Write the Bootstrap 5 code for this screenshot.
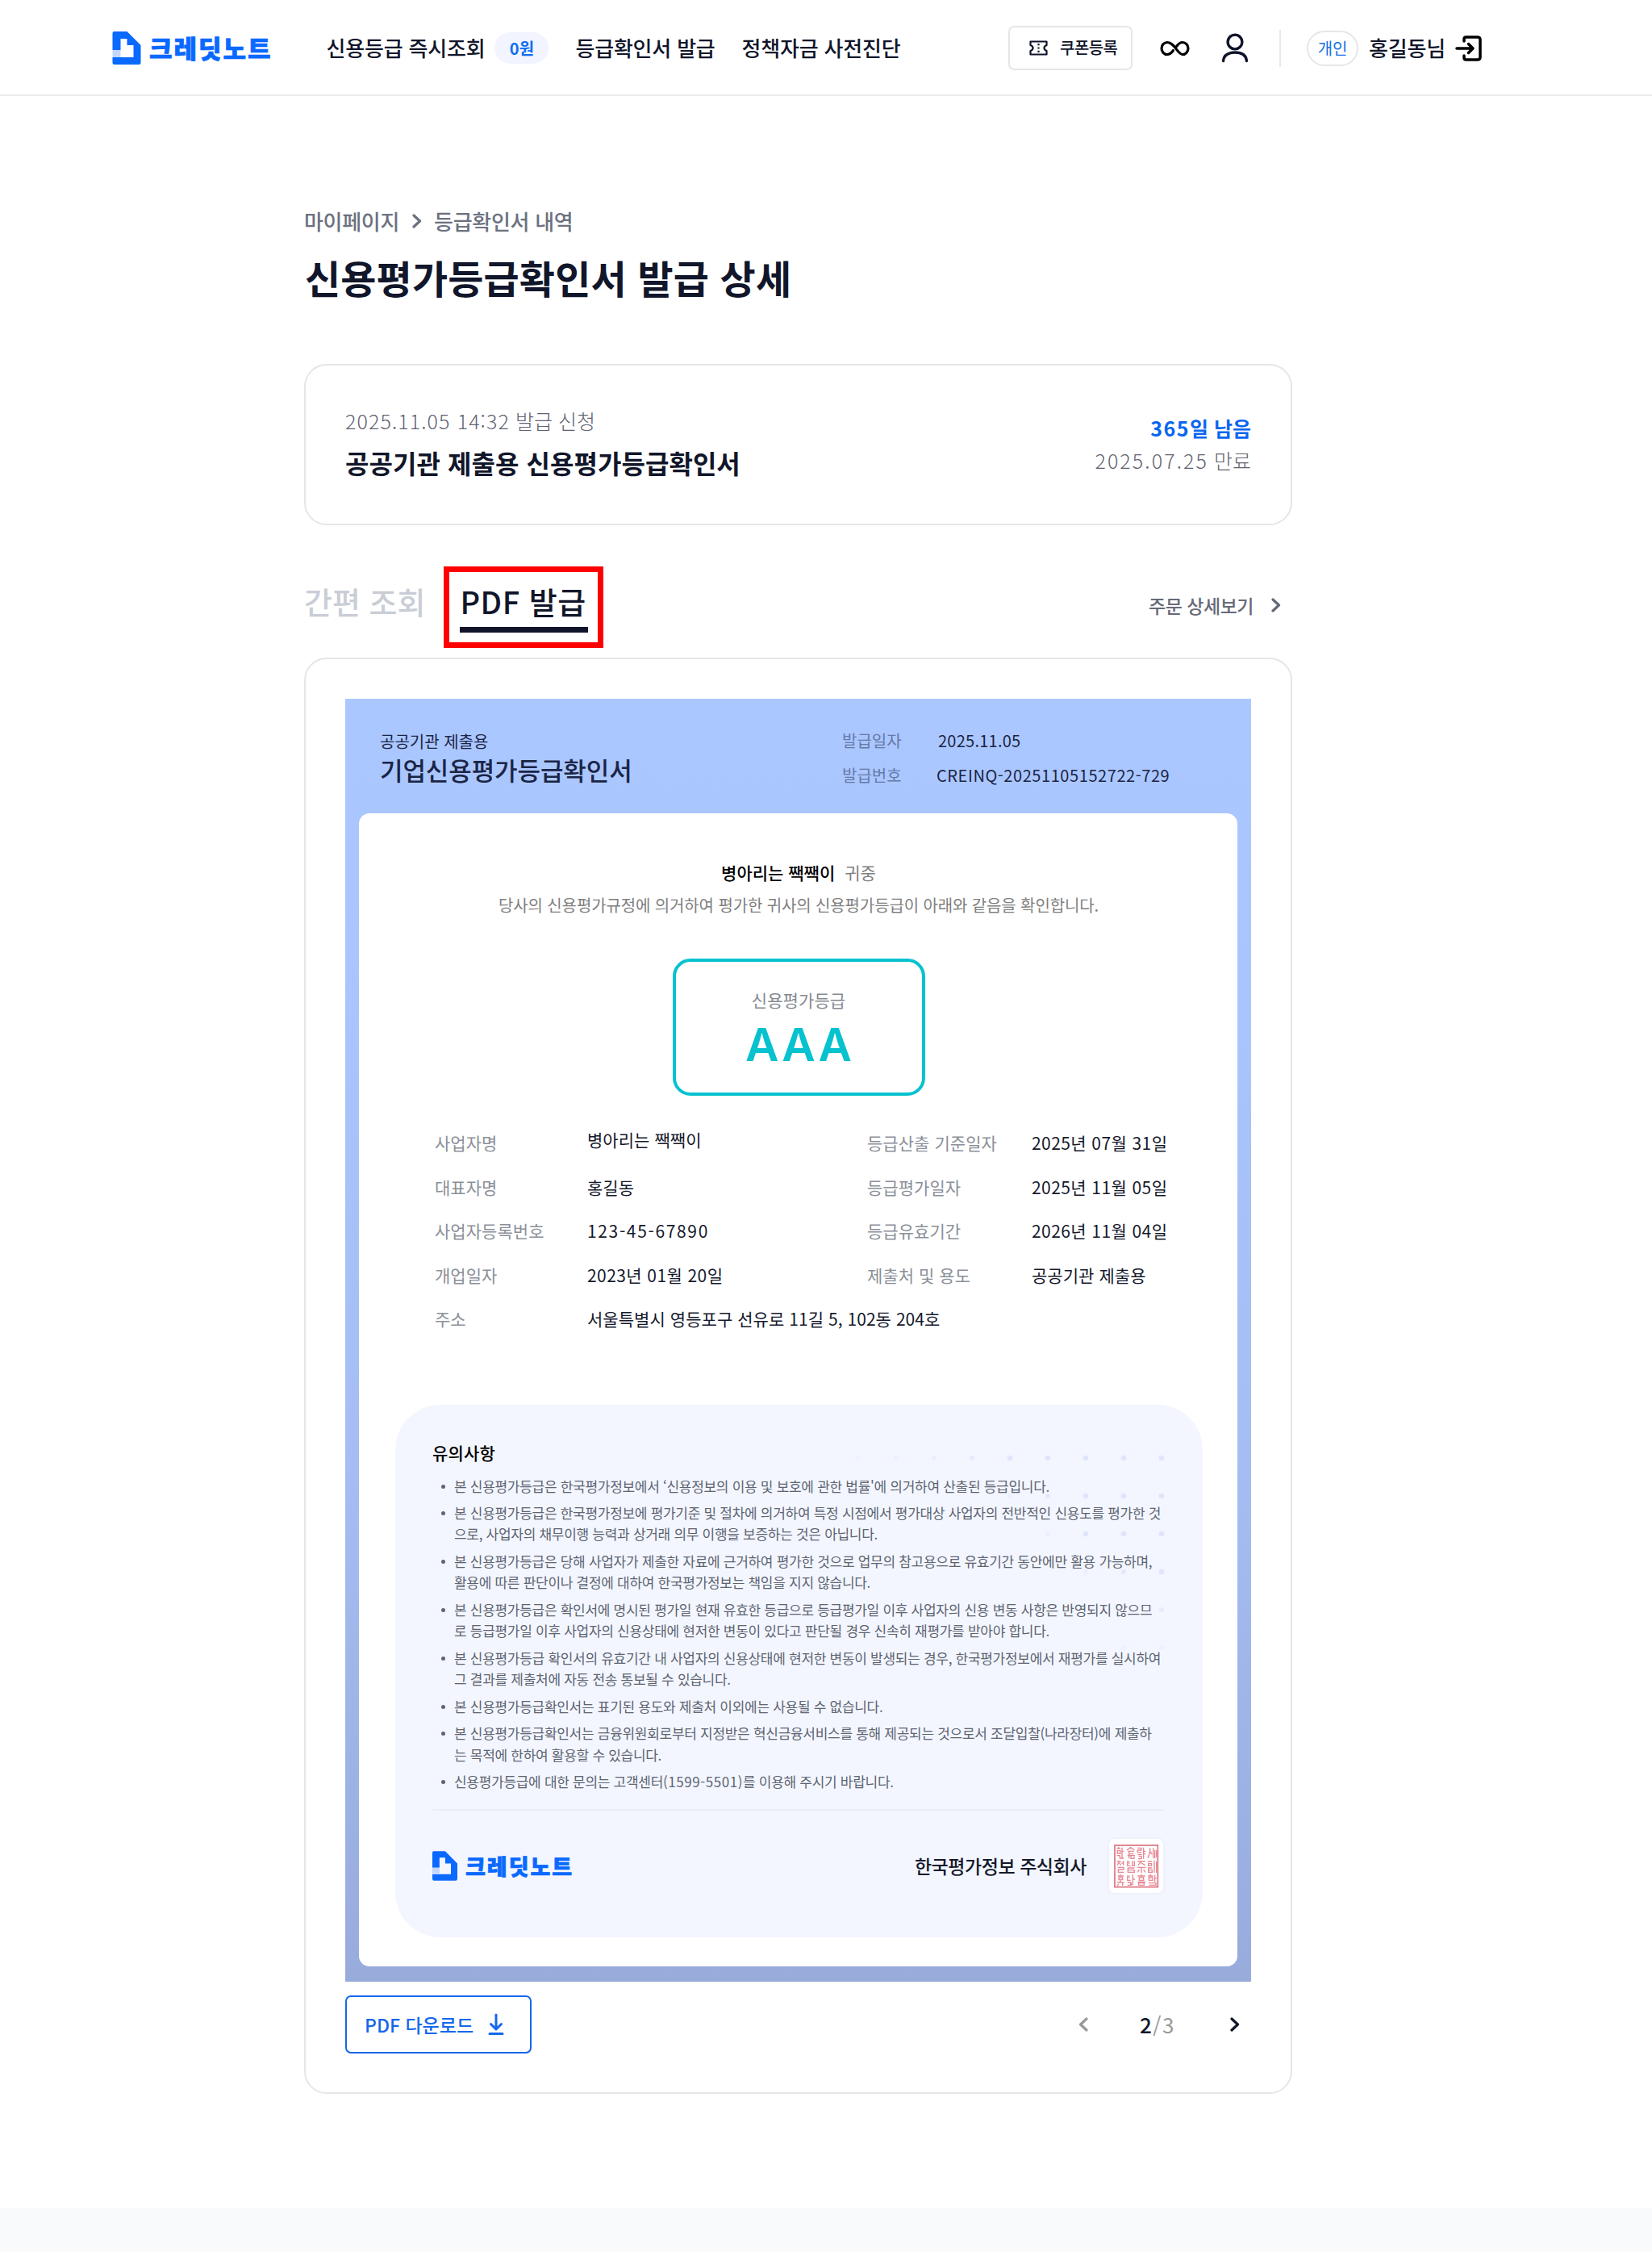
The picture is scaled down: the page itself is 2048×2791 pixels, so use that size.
<!DOCTYPE html>
<html lang="ko">
<head>
<meta charset="utf-8">
<meta name="viewport" content="width=device-width, initial-scale=1">
<title>신용평가등급확인서 발급 상세</title>
<link href="https://cdn.jsdelivr.net/npm/bootstrap@5.3.0/dist/css/bootstrap.min.css" rel="stylesheet">
<style>
body{font-family:"Noto Sans CJK KR","Noto Sans",sans-serif;color:#11162a;background:#fff;min-height:2791px;line-height:1}
a{color:inherit;text-decoration:none}
svg{display:block;flex:none}
.text-line{white-space:nowrap;display:block}
/* header */
.site-head{height:119px;border-bottom:2px solid #ebebeb;padding:2px 211px 0 139px}
.site-head .text-line{margin-top:-2px}
.brand-word{color:#0a69ff;font-weight:900;-webkit-text-stroke:.7px #0a69ff}
.site-head .brand-word{font-size:31px;letter-spacing:2px;margin-left:10px}
.site-menu{margin-left:67px}
.menu-link{font-size:26px;font-weight:500;letter-spacing:-.2px}
.menu-link + .menu-link,.won-pill + .menu-link{margin-left:33px}
.won-pill{background:#f2f4ff;color:#1070f0;font-size:20px;font-weight:700;border-radius:20px;width:67px;height:39px;margin-left:12px}
.coupon{border:2px solid #e6e6e9;border-radius:7px;width:154px;height:55px;font-size:20px;font-weight:500;padding:0 0 0 24px;letter-spacing:-.6px}
.coupon .text-line{margin-left:15px}
.head-rule{width:2px;height:46px;background:#e9e9ec;margin:0 32px 0 38px}
.kind-pill{border:2px solid #e6e6e9;border-radius:22px;width:64px;height:44px;color:#1673e6;font-size:20px}
.user-name{font-size:26px;font-weight:500;margin-left:13px;letter-spacing:-.2px}
/* main column */
.page-col{width:1225px;margin-left:377px;padding-top:136px}
.crumbs{font-size:26px;font-weight:500;color:#6b7180;letter-spacing:-.3px;height:38px}
.crumbs svg{margin:0 15px 0 16px}
.page-title{font-size:48px;font-weight:600;line-height:64px;margin:18px 0 0 1px;letter-spacing:.15px}
.panel{border:2px solid #e6e6e8;border-radius:28px;background:#fff}
.info-panel{height:200px;margin-top:76px;padding:0 49px}
.soft{color:#5f6371}
.info-date{font-size:25px;line-height:52px;font-weight:300}
.info-date i,.info-exp i,.info-left i{font-style:normal}
.info-date i{letter-spacing:1.1px}
.info-name{font-size:32px;line-height:52px;font-weight:600;letter-spacing:.05px;margin-bottom:8px}
.info-left{font-size:25px;line-height:40px;font-weight:700;color:#0a66f0}
.info-left i{letter-spacing:1.5px}
.info-exp{font-size:25px;line-height:40px;font-weight:300;margin-bottom:3px}
.info-exp i{letter-spacing:2.1px}
.tab-row{height:164px;padding-top:51px}
.tab-off{font-size:38px;font-weight:500;color:#c9cdd6;line-height:60px;margin:13px 0 0 0;letter-spacing:0}
.tab-on{border:7px solid #f00;width:198px;height:101px;margin-left:23px;font-size:38px;font-weight:500;padding:6px 12px 0 13px}
.tab-on .text-line{border-bottom:7px solid #10142a;height:69px;line-height:60px;padding-left:0;letter-spacing:.5px}
.order-link{font-size:23px;font-weight:500;color:#666a77;margin:33px 14px 0 0;height:30px;letter-spacing:-.5px}
.order-link svg{margin-left:22px}
.doc-panel{padding:49px 49px 0;height:1780px}
/* certificate */
.cert{width:1123px;height:1590px;background:linear-gradient(180deg,#abc7ff 0,#a9c5fd 25%,#a5bdf2 60%,#98acdc 100%);padding:0 17px}
.cert-head{height:142px;padding:0 84px 0 26px;color:#1a2546}
.cert-titles{padding-top:35px}
.cert-kind{font-size:20px;line-height:36px}
.cert-name{font-size:31px;line-height:34px;font-weight:500;letter-spacing:-.1px}
.cert-meta{font-size:20px;line-height:43px;padding-top:30px;width:406px}
.cert-meta dt,.facts dt{font-weight:400;flex:none}
.cert-meta dt{width:117px;color:#6579a8}
.cert-meta dd{margin:0}
.cert-meta .meta-date{padding-left:2px;letter-spacing:.25px}
.cert-meta .meta-no{letter-spacing:.57px}
.cert-sheet{background:#fff;border-radius:13px;height:1429px;padding:52px 44px 0 45px}
.to-line{font-size:21px;line-height:42px;color:#808080}
.to-line b{font-weight:500;color:#000;margin-right:12px}
.say-line{font-size:20px;line-height:40px;color:#808080;letter-spacing:-.12px}
.grade-box{width:313px;height:170px;border:4px solid #06c2cf;border-radius:22px;margin:46px auto 0;padding-top:31px}
.grade-cap{font-size:21px;line-height:32px;color:#858992;letter-spacing:.1px}
.grade-val{font-family:Inter,"Noto Sans CJK KR",sans-serif;font-weight:600;font-size:57px;line-height:60px;color:#06c2cf;letter-spacing:3px;padding:10px 0 0 3px}
.facts{margin:31px 0 0 49px;font-size:21px;line-height:54.5px;letter-spacing:.05px}
.facts dt{width:189px;color:#8b8f99}
.facts dd{margin:0;color:#15192c}
.facts .dates{letter-spacing:.42px}
.facts .reg-no{letter-spacing:1.65px}
.facts .fact-left{width:536px}
.facts .owner{margin:-4px 0 4px}
.facts .fact-right dt{width:204px}
/* notices */
.notice{background:#f3f6fe;border-radius:56px;width:1001px;height:660px;margin-top:79px;padding:43px 48px 0 46px;position:relative}
.notice-dots{position:absolute;left:571px;top:60px}
.notice-body{position:relative}
.notice-h{font-size:21px;font-weight:500;color:#000;line-height:32px;margin:0;letter-spacing:.2px}
.notice ul{list-style:none;padding:0 0 0 27px;margin:13px 0 0;color:#5d6472;font-size:17px;line-height:26.6px;letter-spacing:-.29px}
.notice li{margin-bottom:6.75px;white-space:nowrap;position:relative}
.notice li::before{content:"";position:absolute;left:-16px;top:11px;width:5px;height:5px;border-radius:50%;background:#5d6472}
.notice .tel{letter-spacing:.55px}
.notice-foot{border-top:2px solid #e9edf6;margin-top:21px;padding-top:35px}
.notice-foot .brand-word{font-size:27px;letter-spacing:2px;margin-left:10px}
.corp{font-size:23px;font-weight:500;letter-spacing:-.45px;margin-right:28px;color:#15192c}
.seal{background:#fff;border-radius:7px;box-shadow:0 0 4px #e6e9fa;margin-right:1px}
/* panel foot */
.doc-foot{padding-top:17px}
.dl-btn.btn{border:2px solid #1468ea;border-radius:7px;width:231px;height:72px;font-size:23px;font-weight:500;color:#1468ea;padding:0 0 0 22px;letter-spacing:0}
.dl-btn svg{margin-left:18px}
.pager{padding-right:14px}
.pager-num{font-size:26px;color:#999;width:48px;margin:0 64px;letter-spacing:1.5px}
.pager-num b{font-weight:500;color:#10142a}
.pager .prev{transform:scaleX(-1);color:#999}
.foot-band{height:56px;background:#f8fafc;margin-top:141px}
</style>
</head>
<body>
<svg width="0" height="0" class="position-absolute">
  <symbol id="note-mark" viewBox="0 0 35 41"><path fill="#0a69ff" d="M2 0H18L35 17V38.500Q35 41 32.500 41H2.500Q0 41 0 38.500V32H26V17H18V9H10V23H0V2Q0 0 2 0Z"/><path fill="#c3d6fc" d="M0 23H10V32H0Z"/></symbol>
  <symbol id="chev" viewBox="0 0 12 18"><path d="M2 2L9.500 9L2 16" fill="none" stroke="currentColor" stroke-width="3.200" stroke-linecap="round" stroke-linejoin="round"/></symbol>
</svg>

<header class="site-head d-flex align-items-center">
  <a href="#" class="d-flex align-items-center"><svg width="36" height="41"><use href="#note-mark"/></svg><span class="brand-word text-line">크레딧노트</span></a>
  <nav class="site-menu d-flex align-items-center">
    <a href="#" class="menu-link text-line">신용등급 즉시조회</a>
    <span class="won-pill d-flex align-items-center justify-content-center">0원</span>
    <a href="#" class="menu-link text-line">등급확인서 발급</a>
    <a href="#" class="menu-link text-line">정책자금 사전진단</a>
  </nav>
  <div class="d-flex align-items-center ms-auto">
    <a href="#" class="coupon d-flex align-items-center">
      <svg width="23" height="19" viewBox="0 0 23 19" fill="none" stroke="#10142a" stroke-width="2.200"><path d="M1.500 1.500H21.500V6Q18.500 7 18.500 9.500T21.500 13V17.500H1.500V13Q4.500 12 4.500 9.500T1.500 6Z" stroke-linejoin="round"/><path d="M11.500 4V15" stroke-dasharray="2.200 2.200"/></svg>
      <span class="text-line">쿠폰등록</span>
    </a>
    <svg style="margin-left:34px" width="37" height="20" viewBox="0 0 37 20" fill="none" stroke="#000" stroke-width="3.200" stroke-linecap="round"><path d="M20.500 7.500C23 4 25 2.500 28 2.500A7 7.500 0 0 1 28 17.500C22 17.500 18 2.500 9 2.500A7 7.500 0 0 0 9 17.500C12 17.500 14 16 16.500 12.500"/></svg>
    <svg style="margin-left:39px" width="34" height="37" viewBox="0 0 34 37" fill="none" stroke="#10142a" stroke-width="3.400" stroke-linecap="round"><circle cx="17" cy="11" r="8.900"/><path d="M2.500 34.500Q3.500 24 17 24T31.500 34.500"/></svg>
    <span class="head-rule"></span>
    <span class="kind-pill d-flex align-items-center justify-content-center">개인</span>
    <span class="user-name text-line">홍길동님</span>
    <svg style="margin-left:12px" width="33" height="32" viewBox="0 0 33 32" fill="none" stroke="#000" stroke-width="3.500" stroke-linecap="round" stroke-linejoin="round"><path d="M11 7V4.500Q11 2 13.500 2H27.500Q31 2 31 5V27Q31 30 27.500 30H13.500Q11 30 11 27.500V25M2 16H21M16.500 10.500L22 16L16.500 21.500"/></svg>
  </div>
</header>

<main class="page-col">
  <nav class="crumbs d-flex align-items-center">
    <span class="text-line">마이페이지</span><svg width="12" height="18"><use href="#chev"/></svg><span class="text-line">등급확인서 내역</span>
  </nav>
  <h1 class="page-title text-line">신용평가등급확인서 발급 상세</h1>

  <section class="panel info-panel d-flex align-items-center justify-content-between">
    <div><span class="info-date soft text-line"><i>2025.11.05 14:32</i> 발급 신청</span><span class="info-name text-line">공공기관 제출용 신용평가등급확인서</span></div>
    <div class="text-end"><span class="info-left text-line"><i>365</i>일 남음</span><span class="info-exp soft text-line"><i>2025.07.25</i> 만료</span></div>
  </section>

  <div class="tab-row d-flex align-items-start">
    <a href="#" class="tab-off text-line">간편 조회</a>
    <a href="#" class="tab-on"><span class="text-line">PDF 발급</span></a>
    <a href="#" class="order-link d-flex align-items-center ms-auto"><span class="text-line">주문 상세보기</span><svg width="12" height="18"><use href="#chev"/></svg></a>
  </div>

  <section class="panel doc-panel">
    <article class="cert">
      <header class="cert-head d-flex justify-content-between">
        <div class="cert-titles"><span class="cert-kind text-line">공공기관 제출용</span><span class="cert-name text-line">기업신용평가등급확인서</span></div>
        <dl class="cert-meta mb-0">
          <div class="d-flex"><dt>발급일자</dt><dd class="text-line meta-date">2025.11.05</dd></div>
          <div class="d-flex"><dt>발급번호</dt><dd class="text-line meta-no">CREINQ-20251105152722-729</dd></div>
        </dl>
      </header>
      <div class="cert-sheet">
        <div class="text-center">
          <span class="to-line text-line"><b>병아리는 짹짹이</b>귀중</span>
          <span class="say-line text-line">당사의 신용평가규정에 의거하여 평가한 귀사의 신용평가등급이 아래와 같음을 확인합니다.</span>
          <div class="grade-box"><span class="grade-cap text-line">신용평가등급</span><span class="grade-val text-line">AAA</span></div>
        </div>
        <div class="facts d-flex text-nowrap">
          <dl class="fact-left mb-0">
            <div class="d-flex"><dt>사업자명</dt><dd class="owner">병아리는 짹짹이</dd></div>
            <div class="d-flex"><dt>대표자명</dt><dd>홍길동</dd></div>
            <div class="d-flex"><dt>사업자등록번호</dt><dd class="reg-no">123-45-67890</dd></div>
            <div class="d-flex"><dt>개업일자</dt><dd class="dates">2023년 01월 20일</dd></div>
            <div class="d-flex"><dt>주소</dt><dd>서울특별시 영등포구 선유로 11길 5, 102동 204호</dd></div>
          </dl>
          <dl class="fact-right mb-0">
            <div class="d-flex"><dt>등급산출 기준일자</dt><dd class="dates">2025년 07월 31일</dd></div>
            <div class="d-flex"><dt>등급평가일자</dt><dd class="dates">2025년 11월 05일</dd></div>
            <div class="d-flex"><dt>등급유효기간</dt><dd class="dates">2026년 11월 04일</dd></div>
            <div class="d-flex"><dt>제출처 및 용도</dt><dd>공공기관 제출용</dd></div>
          </dl>
        </div>
        <section class="notice">
          <svg class="notice-dots" width="400" height="260" fill="#dfe5fb">
            <circle cx="3" cy="6" r="3" opacity=".15"/><circle cx="50" cy="6" r="3" opacity=".25"/><circle cx="97" cy="6" r="3" opacity=".5"/><circle cx="144" cy="6" r="3" opacity=".75"/><circle cx="191" cy="6" r="3.300"/><circle cx="238" cy="6" r="3.300"/><circle cx="285" cy="6" r="3.300"/><circle cx="332" cy="6" r="3.300"/><circle cx="379" cy="6" r="3.300"/>
            <circle cx="191" cy="53" r="3" opacity=".3"/><circle cx="238" cy="53" r="3" opacity=".8"/><circle cx="285" cy="53" r="3.300"/><circle cx="332" cy="53" r="3.300"/><circle cx="379" cy="53" r="3.300"/>
            <circle cx="238" cy="100" r="3" opacity=".35"/><circle cx="285" cy="100" r="3.300"/><circle cx="332" cy="100" r="3.300"/><circle cx="379" cy="100" r="3.300"/>
            <circle cx="285" cy="147" r="3" opacity=".3"/><circle cx="332" cy="147" r="3" opacity=".8"/><circle cx="379" cy="147" r="3.300"/>
            <circle cx="379" cy="194" r="3" opacity=".6"/><circle cx="332" cy="241" r="3" opacity=".2"/><circle cx="379" cy="241" r="3" opacity=".3"/>
          </svg>
          <div class="notice-body">
            <h2 class="notice-h text-line">유의사항</h2>
            <ul>
              <li>본 신용평가등급은 한국평가정보에서 ‘신용정보의 이용 및 보호에 관한 법률'에 의거하여 산출된 등급입니다.</li>
              <li>본 신용평가등급은 한국평가정보에 평가기준 및 절차에 의거하여 특정 시점에서 평가대상 사업자의 전반적인 신용도를 평가한 것<br>으로, 사업자의 채무이행 능력과 상거래 의무 이행을 보증하는 것은 아닙니다.</li>
              <li>본 신용평가등급은 당해 사업자가 제출한 자료에 근거하여 평가한 것으로 업무의 참고용으로 유효기간 동안에만 활용 가능하며,<br>활용에 따른 판단이나 결정에 대하여 한국평가정보는 책임을 지지 않습니다.</li>
              <li>본 신용평가등급은 확인서에 명시된 평가일 현재 유효한 등급으로 등급평가일 이후 사업자의 신용 변동 사항은 반영되지 않으므<br>로 등급평가일 이후 사업자의 신용상태에 현저한 변동이 있다고 판단될 경우 신속히 재평가를 받아야 합니다.</li>
              <li>본 신용평가등급 확인서의 유효기간 내 사업자의 신용상태에 현저한 변동이 발생되는 경우, 한국평가정보에서 재평가를 실시하여<br>그 결과를 제출처에 자동 전송 통보될 수 있습니다.</li>
              <li>본 신용평가등급확인서는 표기된 용도와 제출처 이외에는 사용될 수 없습니다.</li>
              <li>본 신용평가등급확인서는 금융위원회로부터 지정받은 혁신금융서비스를 통해 제공되는 것으로서 조달입찰(나라장터)에 제출하<br>는 목적에 한하여 활용할 수 있습니다.</li>
              <li>신용평가등급에 대한 문의는 고객센터<span class="tel">(1599-5501)</span>를 이용해 주시기 바랍니다.</li>
            </ul>
            <div class="notice-foot d-flex align-items-center">
              <svg width="31" height="37"><use href="#note-mark"/></svg><span class="brand-word text-line">크레딧노트</span>
              <span class="corp text-line ms-auto">한국평가정보 주식회사</span>
              <svg class="seal" width="67" height="67" viewBox="24 22 201 201" fill="none" stroke="#e58894" stroke-width="4">
                <rect x="45" y="46" width="160" height="155" stroke="#dd7280" stroke-width="5"/>
                <path d="M53 58H66M59 52V58M55 66H66V76H55ZM72 54V92M72 68H79M53 84H64V94H78"/>
                <path d="M90 64L104 54L118 64M94 68H116M98 68V78H116M92 84H120M98 78V95M105 84V95H117V87"/>
                <path d="M130 56H144V64H130V72H144M130 80H146M134 86H144V96H132M152 54V96M152 68H160M152 78H160"/>
                <path d="M176 56V70L168 94M176 68L184 80M188 56V94M194 64V94M200 64V90"/>
                <path d="M53 106H68M62 106L54 120M62 112L68 120M77 104V120M70 112H77M56 128H78V136H58V146H79"/>
                <path d="M92 104V122H104M98 104V116M110 104V124M118 104V122H110M94 130H118M94 138H118V146H94ZM94 130V146"/>
                <path d="M130 106H158M144 106L132 120M144 112L158 120M129 128H160M144 128V148M136 136L130 146M152 136L158 146"/>
                <path d="M168 106H184M170 114H182V122H170ZM192 102V148M200 106V148M168 130H184M172 138H184V146H170V130"/>
                <path d="M56 160H78M66 154V160M60 166H74V174H60ZM66 174V182M54 184H80M60 190L54 196M74 184V196"/>
                <path d="M92 158V176H104M98 158V168M112 154V194M112 172H120M92 184H104V194H92M104 184L108 194"/>
                <path d="M130 160H158M144 154V160M136 166H152V176H136ZM130 182H160M134 186H154V194H134Z"/>
                <path d="M168 160H188M178 154V160M172 166H186V176H172ZM194 156V182M194 168H201M170 186H198V194H172"/>
              </svg>
            </div>
          </div>
        </section>
      </div>
    </article>
    <div class="doc-foot d-flex align-items-center">
      <button type="button" class="btn dl-btn d-flex align-items-center"><span class="text-line">PDF 다운로드</span><svg width="20" height="28" viewBox="0 0 20 28" fill="none" stroke="#1468ea" stroke-width="3" stroke-linecap="round" stroke-linejoin="round"><path d="M10 2V19.500M3.500 13.500L10 20L16.500 13.500M2 25.500H18"/></svg></button>
      <div class="pager d-flex align-items-center ms-auto">
        <svg class="prev" width="12" height="18"><use href="#chev"/></svg>
        <span class="pager-num text-line"><b>2</b>/3</span>
        <svg width="12" height="18"><use href="#chev"/></svg>
      </div>
    </div>
  </section>
</main>
<footer class="foot-band"></footer>
<script src="https://cdn.jsdelivr.net/npm/bootstrap@5.3.0/dist/js/bootstrap.bundle.min.js"></script>
</body>
</html>
